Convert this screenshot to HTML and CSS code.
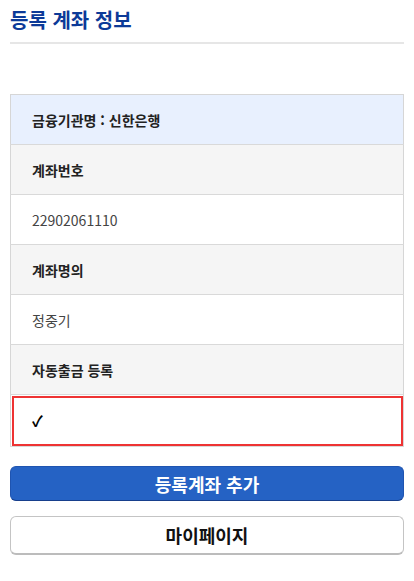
FILE: index.html
```html
<!DOCTYPE html>
<html lang="ko">
<head>
    <meta charset="UTF-8">
    <meta name="viewport" content="width=device-width, initial-scale=1.0">
    <title>등록 계좌 정보</title>
    <link rel="stylesheet" href="styles.css">
</head>
<body>
<main class="page">
    <h1 class="page-title">등록 계좌 정보</h1>

    <table class="account-table">
        <tr><td class="bank">금융기관명 : 신한은행</td></tr>
        <tr><th>계좌번호</th></tr>
        <tr><td>22902061110</td></tr>
        <tr><th>계좌명의</th></tr>
        <tr><td>정중기</td></tr>
        <tr><th>자동출금 등록</th></tr>
        <tr><td class="auto">✓</td></tr>
    </table>

    <div class="actions">
        <button type="button" class="btn btn-primary">등록계좌 추가</button>
        <button type="button" class="btn btn-default">마이페이지</button>
    </div>
</main>
</body>
</html>
```

FILE: styles.css
```css
body {
    margin: 0;
    padding: 0;
    font-family: "Noto Sans CJK KR", "Noto Sans", sans-serif;
    background-color: #fff;
    color: #222;
}

.page {
    padding: 0 10px;
}

.page-title {
    margin: 0;
    padding: 5px 0 8px;
    font-size: 20px;
    line-height: 29px;
    font-weight: 700;
    color: #0c3a98;
    border-bottom: 2px solid #e6e6e6;
}

.account-table {
    width: 100%;
    margin-top: 50px;
    border-collapse: collapse;
    border: 1px solid #d6d6d6;
}

.account-table th,
.account-table td {
    height: 50px;
    padding: 0 0 0 21px;
    border-bottom: 1px solid #d9d9d9;
    text-align: left;
    font-size: 14px;
    box-sizing: border-box;
}

.account-table th {
    background-color: #f5f5f5;
    font-weight: 700;
    color: #222;
}

.account-table td {
    background-color: #fff;
    color: #444;
    font-weight: 400;
}

.account-table td.bank {
    background-color: #e8f0fe;
    color: #222;
    font-weight: 700;
}

.account-table td.auto {
    height: 52px;
    outline: 2px solid #ee3333;
    outline-offset: -3px;
    color: #000;
    font-size: 15px;
    font-weight: 700;
}

.actions {
    display: flex;
    flex-direction: column;
    gap: 15px;
    margin-top: 19px;
}

.btn {
    width: 100%;
    padding: 0;
    border-radius: 6px;
    font-family: "Noto Sans CJK KR", "Noto Sans", sans-serif;
    font-size: 18px;
    font-weight: 700;
    cursor: pointer;
}

.btn-primary {
    height: 35px;
    background-color: #2562c4;
    color: #fff;
    border: 1px solid #1f54b0;
    border-bottom-color: #173f8c;
}

.btn-default {
    height: 39px;
    background-color: #fff;
    color: #111;
    border: 1px solid #c4c4c4;
    border-bottom: 2px solid #bcbcbc;
}
```
